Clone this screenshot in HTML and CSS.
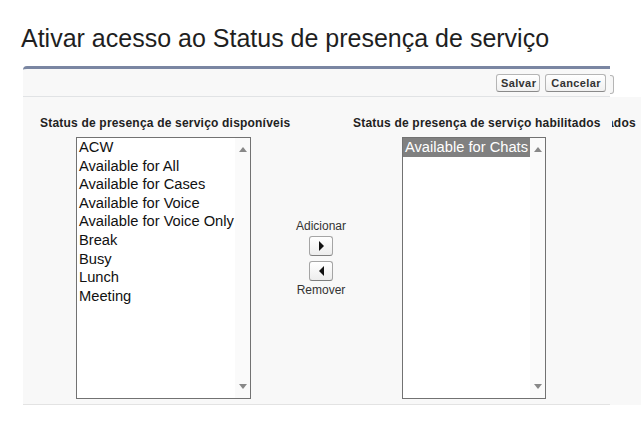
FILE: index.html
```html
<!DOCTYPE html>
<html lang="pt">
<head>
<meta charset="utf-8">
<title>Ativar acesso ao Status de presença de serviço</title>
<link rel="stylesheet" href="styles.css">
</head>
<body>
<h1 class="title">Ativar acesso ao Status de presença de serviço</h1>
<div class="panel">
  <div class="main">
    <div class="head">
      <button class="btn">Salvar</button>
      <button class="btn btn-wide">Cancelar</button>
    </div>
    <div class="body">
      <div class="labels">
        <div class="label label-left">Status de presença de serviço disponíveis</div>
        <div class="label">Status de presença de serviço habilitados</div>
      </div>
      <div class="lists">
        <div class="listbox list-left">
          <div class="options">
            <div class="opt">ACW</div>
            <div class="opt">Available for All</div>
            <div class="opt">Available for Cases</div>
            <div class="opt">Available for Voice</div>
            <div class="opt">Available for Voice Only</div>
            <div class="opt">Break</div>
            <div class="opt">Busy</div>
            <div class="opt">Lunch</div>
            <div class="opt">Meeting</div>
          </div>
          <div class="scroll"><span class="arr-up"></span><span class="arr-down"></span></div>
        </div>
        <div class="middle">
          <div class="mid-text">Adicionar</div>
          <button class="arrow-btn"><span class="tri-right"></span></button>
          <button class="arrow-btn"><span class="tri-left"></span></button>
          <div class="mid-text">Remover</div>
        </div>
        <div class="listbox list-right">
          <div class="options">
            <div class="opt selected">Available for Chats</div>
          </div>
          <div class="scroll"><span class="arr-up"></span><span class="arr-down"></span></div>
        </div>
      </div>
    </div>
  </div>
  <div class="stub">
    <div class="stub-head"><span class="btn-edge"></span></div>
    <div class="stub-body">
      <div class="label stub-label"><span class="stub-text">ados</span></div>
    </div>
  </div>
</div>
</body>
</html>
```
FILE: styles.css
```css
html, body {
  margin: 0;
  padding: 0;
  background: #ffffff;
  font-family: "Liberation Sans", Arial, sans-serif;
  color: #222222;
  overflow: hidden;
}

.title {
  margin: 0;
  padding: 24px 0 0 21px;
  height: 28px;
  line-height: 28px;
  font-size: 25px;
  font-weight: normal;
  color: #1f1f1f;
}

.panel {
  margin: 14px 0 0 23px;
  display: flex;
}

.main {
  width: 587px;
  flex: none;
  background: #f8f8f8;
  border-top: 3px solid #7a86a2;
  border-top-left-radius: 4px;
  border-bottom: 1px solid #e3e3e3;
}

.head {
  height: 27px;
  display: flex;
  justify-content: flex-end;
  align-items: center;
  gap: 5px;
  padding-right: 4px;
  border-bottom: 1px solid #e1e3e5;
}

.btn {
  font-family: "Liberation Sans", Arial, sans-serif;
  font-size: 11px;
  font-weight: bold;
  letter-spacing: 0.4px;
  color: #333333;
  height: 18px;
  padding: 0 3px 0 4px;
  border: 1px solid #b5b5b5;
  border-bottom-color: #8a8a8a;
  border-radius: 3px;
  background: linear-gradient(#ffffff, #f0f0f0);
  margin: 0;
}

.btn-wide {
  padding: 0 4px 0 5px;
}

.body {
  height: 307px;
}

.labels {
  display: flex;
  padding: 19px 0 0 17px;
  height: 14px;
}

.label {
  font-size: 12px;
  font-weight: bold;
  letter-spacing: 0.2px;
  color: #222222;
  line-height: 14px;
  white-space: nowrap;
}

.label-left {
  width: 313px;
}

.lists {
  display: flex;
  padding: 7px 0 0 53px;
}

.listbox {
  height: 260px;
  border: 1px solid #727272;
  background: #ffffff;
  display: flex;
}

.list-left {
  width: 173px;
}

.list-right {
  width: 142px;
}

.options {
  flex: 1;
  font-size: 14.7px;
  line-height: 18.6px;
  color: #111111;
  white-space: nowrap;
  overflow: hidden;
}

.opt {
  padding-left: 2px;
  height: 18.6px;
}

.opt.selected {
  background: #808080;
  color: #ffffff;
}

.scroll {
  width: 15px;
  background: #fafafa;
  display: flex;
  flex-direction: column;
  justify-content: space-between;
  align-items: center;
  padding: 9px 0 9px;
}

.arr-up, .arr-down {
  width: 0;
  height: 0;
  border-left: 4px solid transparent;
  border-right: 4px solid transparent;
}

.arr-up {
  border-bottom: 5px solid #888888;
}

.arr-down {
  border-top: 5px solid #888888;
}

.middle {
  width: 140px;
  margin-right: 11px;
  display: flex;
  flex-direction: column;
  align-items: center;
  padding-top: 83px;
}

.mid-text {
  font-size: 12px;
  line-height: 13px;
  color: #333333;
}

.arrow-btn {
  width: 24px;
  height: 20px;
  margin: 3px 0 2px;
  padding: 0;
  border: 1px solid #a5a5a5;
  border-bottom-color: #7f7f7f;
  border-radius: 3px;
  background: linear-gradient(#ffffff, #ededed);
  display: flex;
  align-items: center;
  justify-content: center;
}

.arrow-btn + .arrow-btn {
  margin-bottom: 3px;
}

.tri-right {
  width: 0;
  height: 0;
  border-top: 5px solid transparent;
  border-bottom: 5px solid transparent;
  border-left: 5px solid #111111;
}

.tri-left {
  width: 0;
  height: 0;
  border-top: 5px solid transparent;
  border-bottom: 5px solid transparent;
  border-right: 5px solid #111111;
}

.stub {
  flex: 1;
  display: flex;
  flex-direction: column;
}

.stub-head {
  height: 31px;
  background: #ffffff;
  padding-top: 9px;
  box-sizing: border-box;
}

.btn-edge {
  display: block;
  width: 3px;
  height: 17px;
  border: 1px solid #b5b5b5;
  border-left: none;
  border-radius: 0 3px 3px 0;
  background: #f6f6f6;
}

.stub-body {
  height: 308px;
  background: #f8f8f8;
  padding-top: 19px;
  box-sizing: border-box;
}

.stub-label {
  margin-left: 2px;
  width: 28px;
  overflow: hidden;
}

.stub-text {
  display: inline-block;
  margin-left: -5px;
}
```
